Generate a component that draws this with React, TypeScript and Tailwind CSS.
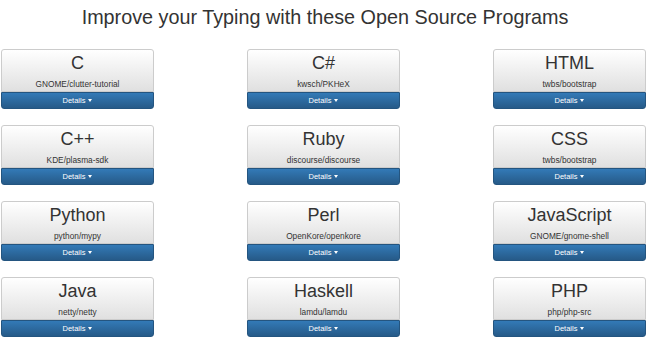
import React from "react";

const items = [
  ["C", "GNOME/clutter-tutorial"],
  ["C#", "kwsch/PKHeX"],
  ["HTML", "twbs/bootstrap"],
  ["C++", "KDE/plasma-sdk"],
  ["Ruby", "discourse/discourse"],
  ["CSS", "twbs/bootstrap"],
  ["Python", "python/mypy"],
  ["Perl", "OpenKore/openkore"],
  ["JavaScript", "GNOME/gnome-shell"],
  ["Java", "netty/netty"],
  ["Haskell", "lamdu/lamdu"],
  ["PHP", "php/php-src"],
];

function Card({ title, repo }: { title: string; repo: string }) {
  return (
    <div className="flex flex-col w-[153px] h-[60px]">
      <div className="h-[43px] flex flex-col items-center border border-[#cccccc] rounded-t-[3px] bg-gradient-to-b from-[#ffffff] to-[#e0e0e0] text-[#333333]">
        <div className="text-[18px] leading-[18px] mt-[4px]">{title}</div>
        <div className="text-[8.3px] leading-[10px] mt-[7px]">{repo}</div>
      </div>
      <div className="h-[17px] flex items-center justify-center border border-[#245580] rounded-b-[3px] bg-gradient-to-b from-[#337ab7] to-[#265a88] text-white text-[7.5px] leading-none">
        <span>Details</span>
        <span className="ml-[3px] inline-block w-0 h-0 border-l-[2.5px] border-r-[2.5px] border-t-[3px] border-l-transparent border-r-transparent border-t-white" />
      </div>
    </div>
  );
}

export default function App() {
  return (
    <div className="w-[650px] h-[343px] bg-white overflow-hidden" style={{ fontFamily: '"Liberation Sans", Arial, sans-serif' }}>
      <h1 className="text-center text-[19.8px] leading-[22px] pt-[6px] text-[#333333]">
        Improve your Typing with these Open Source Programs
      </h1>
      <div className="grid grid-cols-[153px_153px_153px] gap-x-[93px] gap-y-[16px] pl-[1px] mt-[21px]">
        {items.map(([t, r]) => (
          <Card key={t} title={t} repo={r} />
        ))}
      </div>
    </div>
  );
}
